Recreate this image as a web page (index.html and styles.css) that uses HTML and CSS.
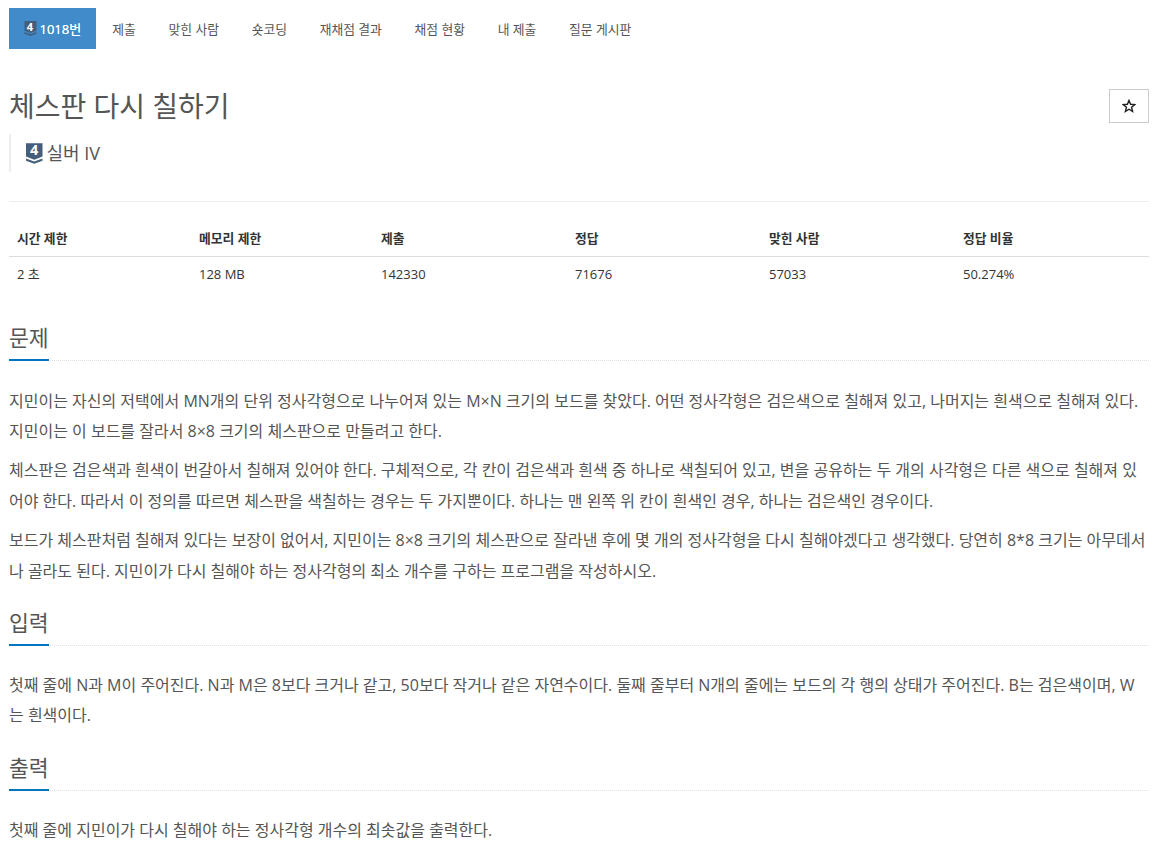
FILE: index.html
```html
<!DOCTYPE html>
<html lang="ko">
<head>
<meta charset="utf-8">
<title>체스판 다시 칠하기</title>
<link rel="stylesheet" href="styles.css">
</head>
<body>
<div class="page">
  <nav class="tabs">
    <a class="tab active"><span class="tier small"><svg viewBox="0 0 16 20"><path d="M0 0H16V13L8 16L0 13Z" fill="#435f7a"/><path d="M0 14.8L8 17.8L16 14.8V17L8 20L0 17Z" fill="#435f7a"/></svg><b class="tier-num">4</b></span>1018번</a>
    <a class="tab">제출</a>
    <a class="tab">맞힌 사람</a>
    <a class="tab">숏코딩</a>
    <a class="tab">재채점 결과</a>
    <a class="tab">채점 현황</a>
    <a class="tab">내 제출</a>
    <a class="tab">질문 게시판</a>
  </nav>
  <header class="title-row">
    <h1 class="title">체스판 다시 칠하기</h1>
    <button class="star-btn"><svg class="star" viewBox="0 0 14 14"><path d="M7 1.4L8.6 5.3L12.8 5.6L9.6 8.3L10.6 12.4L7 10.2L3.4 12.4L4.4 8.3L1.2 5.6L5.4 5.3Z" fill="none" stroke="#222" stroke-width="1.4" stroke-linejoin="miter"/></svg></button>
  </header>
  <div class="tier-line"><span class="tier big"><svg viewBox="0 0 16 20"><path d="M0 0H16V13L8 16L0 13Z" fill="#435f7a"/><path d="M0 14.8L8 17.8L16 14.8V17L8 20L0 17Z" fill="#435f7a"/></svg><b class="tier-num">4</b></span>실버 IV</div>
  <hr class="rule">
  <table class="stats">
    <thead>
      <tr><th class="narrow">시간 제한</th><th class="narrow">메모리 제한</th><th>제출</th><th>정답</th><th>맞힌 사람</th><th>정답 비율</th></tr>
    </thead>
    <tbody>
      <tr><td>2 초</td><td>128 MB</td><td>142330</td><td>71676</td><td>57033</td><td>50.274%</td></tr>
    </tbody>
  </table>
  <section class="block first">
    <div class="head"><h2>문제</h2></div>
    <p>지민이는 자신의 저택에서 MN개의 단위 정사각형으로 나누어져 있는 M×N 크기의 보드를 찾았다. 어떤 정사각형은 검은색으로 칠해져 있고, 나머지는 흰색으로 칠해져 있다. 지민이는 이 보드를 잘라서 8×8 크기의 체스판으로 만들려고 한다.</p>
    <p>체스판은 검은색과 흰색이 번갈아서 칠해져 있어야 한다. 구체적으로, 각 칸이 검은색과 흰색 중 하나로 색칠되어 있고, 변을 공유하는 두 개의 사각형은 다른 색으로 칠해져 있어야 한다. 따라서 이 정의를 따르면 체스판을 색칠하는 경우는 두 가지뿐이다. 하나는 맨 왼쪽 위 칸이 흰색인 경우, 하나는 검은색인 경우이다.</p>
    <p>보드가 체스판처럼 칠해져 있다는 보장이 없어서, 지민이는 8×8 크기의 체스판으로 잘라낸 후에 몇 개의 정사각형을 다시 칠해야겠다고 생각했다. 당연히 8*8 크기는 아무데서나 골라도 된다. 지민이가 다시 칠해야 하는 정사각형의 최소 개수를 구하는 프로그램을 작성하시오.</p>
  </section>
  <section class="block">
    <div class="head"><h2>입력</h2></div>
    <p>첫째 줄에 N과 M이 주어진다. N과 M은 8보다 크거나 같고, 50보다 작거나 같은 자연수이다. 둘째 줄부터 N개의 줄에는 보드의 각 행의 상태가 주어진다. B는 검은색이며, W는 흰색이다.</p>
  </section>
  <section class="block">
    <div class="head"><h2>출력</h2></div>
    <p>첫째 줄에 지민이가 다시 칠해야 하는 정사각형 개수의 최솟값을 출력한다.</p>
  </section>
</div>
</body>
</html>
```
FILE: styles.css
```css
* { box-sizing: border-box; }
html, body { margin: 0; padding: 0; background: #fff; }
body {
  font-family: "Open Sans", "Noto Sans CJK KR", sans-serif;
  font-size: 13px;
  color: #333;
  overflow: hidden;
}
.page { padding: 8px 7px 0 9px; }
.tabs { display: flex; height: 41px; }
.tab {
  display: flex;
  align-items: center;
  padding: 0 16.35px;
  font-size: 12.8px;
  color: #555;
}
.tab.active { background: #428bca; color: #fff; padding: 0 14.5px; margin-right: 0.3px; font-size: 13px; text-shadow: 0 0 0.4px #fff; }
.tier { position: relative; display: inline-block; line-height: 0; flex: none; }
.tier svg { width: 100%; height: 100%; display: block; }
.tier.small { width: 13px; height: 15px; margin-right: 3px; }
.tier.big { width: 16.5px; height: 21px; margin-right: 4px; }
.tier-num {
  position: absolute;
  left: 0;
  right: 0;
  text-align: center;
  color: #fff;
  font-family: "Open Sans", sans-serif;
  font-weight: 700;
  text-shadow: none;
}
.small .tier-num { top: 6px; font-size: 11px; }
.big .tier-num { top: 7.5px; font-size: 14.5px; }
.title-row { display: flex; justify-content: space-between; margin-top: 40px; height: 34px; }
.title { margin: 0; font-size: 28px; font-weight: 400; line-height: 34px; color: #555; }
.star-btn {
  display: flex;
  align-items: center;
  justify-content: center;
  width: 40px;
  height: 34px;
  border: 1px solid #ccc;
  background: #fff;
  padding: 0 1px 0 0;
}
.star { width: 14px; height: 14px; }
.tier-line {
  display: flex;
  align-items: center;
  margin-top: 11px;
  height: 38px;
  border-left: 2px solid #eee;
  padding-left: 15px;
  font-size: 18px;
  line-height: 36px;
  color: #555;
}
.rule { margin: 29px 0 0; border: 0; border-top: 1px solid #eee; }
.stats { width: 100%; border-collapse: collapse; table-layout: fixed; margin-top: 19px; }
.stats th {
  padding: 8px;
  height: 35px;
  line-height: 18px;
  text-align: left;
  font-weight: 700;
  font-size: 12.8px;
  color: #333;
  border-bottom: 1px solid #ddd;
}
.stats th.narrow { width: 182px; }
.stats td { padding: 8px; height: 34px; line-height: 18px; font-size: 13px; color: #333; }
.block { margin-top: 23px; }
.block.first { margin-top: 33px; }
.head { border-bottom: 1px dotted #e0e0e0; margin-bottom: 24px; height: 37px; }
.block.first .head { margin-bottom: 25px; }
.head h2 {
  display: inline-block;
  margin: 0;
  height: 37px;
  font-size: 21.6px;
  font-weight: 400;
  line-height: 28px;
  color: #555;
  border-bottom: 2px solid #0076c0;
}
p { margin: 0 0 9px; font-size: 16px; line-height: 30.4px; color: #555; }
```
